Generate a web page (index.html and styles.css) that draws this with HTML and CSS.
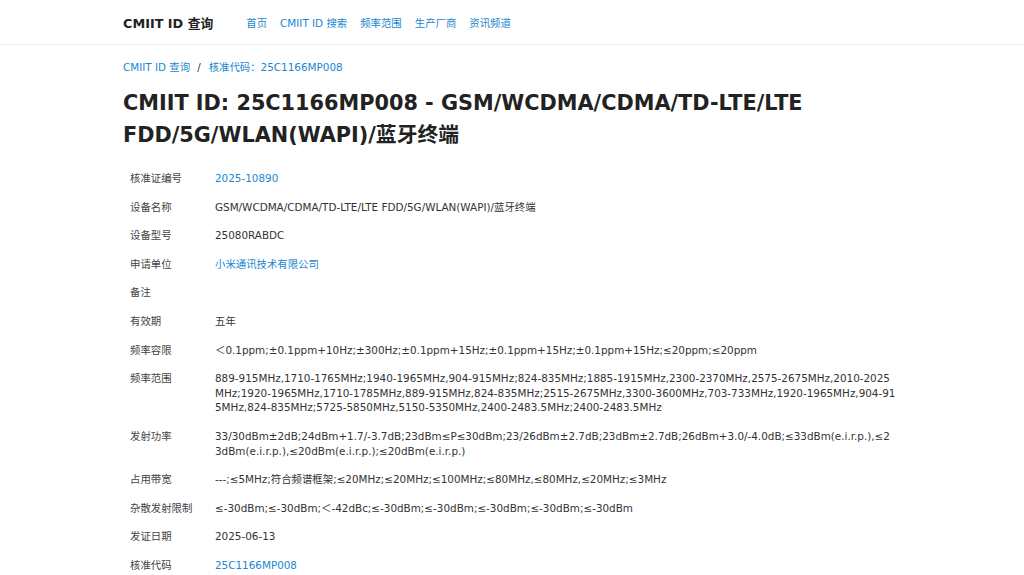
FILE: index.html
```html
<!DOCTYPE html>
<html lang="zh-CN">
<head>
<meta charset="utf-8">
<title>CMIIT ID 查询</title>
<link rel="stylesheet" href="styles.css">
</head>
<body>
<header class="topbar">
  <div class="container bar-inner">
    <a class="brand" href="#">CMIIT ID 查询</a>
    <nav class="nav">
      <a href="#">首页</a>
      <a href="#">CMIIT ID 搜索</a>
      <a href="#">频率范围</a>
      <a href="#">生产厂商</a>
      <a href="#">资讯频道</a>
    </nav>
  </div>
</header>
<main class="container">
  <div class="crumbs"><a href="#">CMIIT ID 查询</a><span class="sep">/</span><a href="#">核准代码：25C1166MP008</a></div>
  <h1 class="title">CMIIT ID: 25C1166MP008 - GSM/WCDMA/CDMA/TD-LTE/LTE FDD/5G/WLAN(WAPI)/蓝牙终端</h1>
  <table class="info">
    <tr><th>核准证编号</th><td><a href="#">2025-10890</a></td></tr>
    <tr><th>设备名称</th><td>GSM/WCDMA/CDMA/TD-LTE/LTE FDD/5G/WLAN(WAPI)/蓝牙终端</td></tr>
    <tr><th>设备型号</th><td>25080RABDC</td></tr>
    <tr><th>申请单位</th><td><a href="#">小米通讯技术有限公司</a></td></tr>
    <tr><th>备注</th><td></td></tr>
    <tr><th>有效期</th><td>五年</td></tr>
    <tr><th>频率容限</th><td>＜0.1ppm;±0.1ppm+10Hz;±300Hz;±0.1ppm+15Hz;±0.1ppm+15Hz;±0.1ppm+15Hz;≤20ppm;≤20ppm</td></tr>
    <tr><th>频率范围</th><td>889-915MHz,1710-1765MHz;1940-1965MHz,904-915MHz;824-835MHz;1885-1915MHz,2300-2370MHz,2575-2675MHz,2010-2025MHz;1920-1965MHz,1710-1785MHz,889-915MHz,824-835MHz;2515-2675MHz,3300-3600MHz,703-733MHz,1920-1965MHz,904-915MHz,824-835MHz;5725-5850MHz,5150-5350MHz,2400-2483.5MHz;2400-2483.5MHz</td></tr>
    <tr><th>发射功率</th><td>33/30dBm±2dB;24dBm+1.7/-3.7dB;23dBm≤P≤30dBm;23/26dBm±2.7dB;23dBm±2.7dB;26dBm+3.0/-4.0dB;≤33dBm(e.i.r.p.),≤23dBm(e.i.r.p.),≤20dBm(e.i.r.p.);≤20dBm(e.i.r.p.)</td></tr>
    <tr><th>占用带宽</th><td>---;≤5MHz;符合频谱框架;≤20MHz;≤20MHz;≤100MHz;≤80MHz,≤80MHz,≤20MHz;≤3MHz</td></tr>
    <tr><th>杂散发射限制</th><td>≤-30dBm;≤-30dBm;＜-42dBc;≤-30dBm;≤-30dBm;≤-30dBm;≤-30dBm;≤-30dBm</td></tr>
    <tr><th>发证日期</th><td>2025-06-13</td></tr>
    <tr><th>核准代码</th><td><a href="#">25C1166MP008</a></td></tr>
  </table>
</main>
</body>
</html>
```

FILE: styles.css
```css
* { box-sizing: border-box; }
html, body { margin: 0; padding: 0; }
body {
  font-family: "DejaVu Sans", "Noto Sans CJK SC", sans-serif;
  color: #333;
  background: #fff;
  font-size: 10.4px;
}
a { color: #1a87d0; text-decoration: none; }
.container {
  width: 778px;
  margin: 0 auto;
}
.topbar {
  border-bottom: 1px solid #eee;
  height: 45px;
}
.bar-inner {
  display: flex;
  align-items: center;
  height: 100%;
}
.brand {
  color: #222;
  font-weight: bold;
  font-size: 12.8px;
  margin-right: 33px;
}
.nav {
  display: flex;
  gap: 13px;
  font-size: 10.4px;
}
.crumbs {
  margin-top: 15px;
  font-size: 10.4px;
  line-height: 15px;
}
.crumbs .sep { color: #333; margin: 0 8px 0 7px; }
.title {
  font-size: 20.8px;
  line-height: 32px;
  color: #222;
  font-weight: bold;
  margin: 12px 0 13px;
}
.info {
  border-collapse: collapse;
  width: 100%;
  table-layout: fixed;
}
.info th, .info td {
  text-align: left;
  vertical-align: top;
  font-weight: normal;
  padding: 7px 7px;
  line-height: 14.6px;
  font-size: 10.4px;
}
.info th {
  width: 85px;
  color: #444;
}
.info td {
  padding-right: 5px;
  word-break: break-all;
  color: #333;
}
```
